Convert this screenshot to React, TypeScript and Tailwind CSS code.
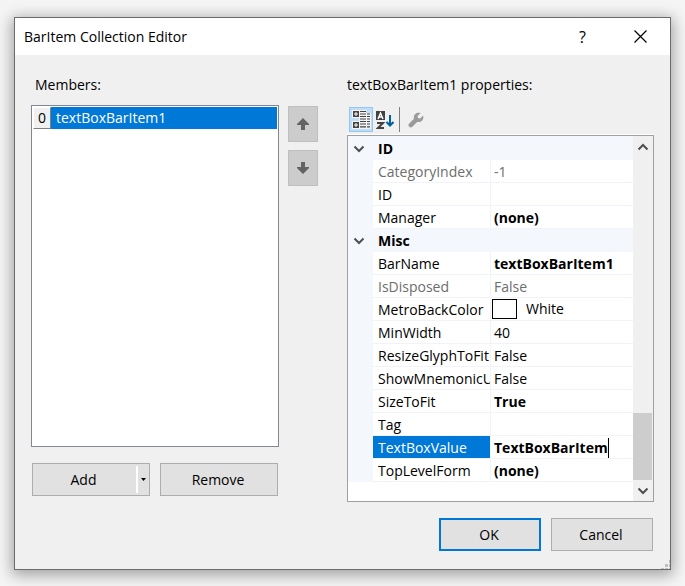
import { useState } from "react";
import clsx from "clsx";

interface Property {
    name: string;
    value?: string;
    bold?: boolean;
    readOnly?: boolean;
    swatch?: boolean;
    editing?: boolean;
}

const CATEGORIES: { title: string; properties: Property[] }[] = [
    {
        title: "ID",
        properties: [
            { name: "CategoryIndex", value: "-1", readOnly: true },
            { name: "ID" },
            { name: "Manager", value: "(none)", bold: true }
        ]
    },
    {
        title: "Misc",
        properties: [
            { name: "BarName", value: "textBoxBarItem1", bold: true },
            { name: "IsDisposed", value: "False", readOnly: true },
            { name: "MetroBackColor", value: "White", swatch: true },
            { name: "MinWidth", value: "40" },
            { name: "ResizeGlyphToFit", value: "False" },
            { name: "ShowMnemonicU", value: "False" },
            { name: "SizeToFit", value: "True", bold: true },
            { name: "Tag" },
            { name: "TextBoxValue", value: "TextBoxBarItem", bold: true, editing: true },
            { name: "TopLevelForm", value: "(none)", bold: true }
        ]
    }
];

function Chevron({ up = false }: { up?: boolean }) {
    return (
        <svg width="12" height="8" viewBox="0 0 12 8" fill="none" stroke="#505050" strokeWidth="2">
            <path d={up ? "M1.5 6.5 6 2l4.5 4.5" : "M1.5 1.5 6 6l4.5-4.5"} />
        </svg>
    );
}

function MoveButton({ label, down = false }: { label: string; down?: boolean }) {
    return (
        <button
            aria-label={label}
            className="flex h-9 w-full items-center justify-center border border-[#bfbfbf] bg-[#cccccc]"
        >
            <svg width="12" height="12" viewBox="0 0 12 12" fill="#636363">
                <path d={down ? "M4 0h4v5h4v1L6 12 0 6V5h4z" : "M4 12h4V7h4V6L6 0 0 6v1h4z"} />
            </svg>
        </button>
    );
}

function CategorizedIcon() {
    return (
        <svg width="20" height="19" viewBox="0 0 20 19" fill="#424242">
            <path d="M1 0h14v3h5v16H1v-8h7V8H1z" fill="#f4f4f4" />
            <path d="M2 1h6v6H2zM2 12h6v6H2z" />
            <path d="M3 4h4M5 2v4M3 15h4M5 13v4" stroke="#fff" />
            <path
                d="M9 1.500h6M9 4h6M9 6.500h6M9 9h6M9 11.500h6M9 14h6M9 16.800h6M16 4h3M16 6.500h3M16 9h3M16 11.500h3M16 14h3M16 16.800h3"
                stroke="#424242"
                strokeWidth="1.2"
            />
        </svg>
    );
}

function AlphabeticalIcon() {
    return (
        <svg width="18" height="18" viewBox="0 0 18 18" fill="none">
            <path d="M0 0h9v9H0z" fill="#424242" />
            <path d="m2 8 2.5-6L7 8M3 6h3" stroke="#fff" strokeWidth="1.4" />
            <path d="M1 12h6l-5 5h6" stroke="#424242" strokeWidth="2" />
            <path d="M14 4v11M10.5 11l3.5 3.5 3.5-3.5" stroke="#00609c" strokeWidth="2" />
        </svg>
    );
}

function WrenchIcon() {
    return (
        <svg width="16" height="16" viewBox="0 0 16 16" fill="#9b9b9b">
            <path d="M12.6 1 9.6 4l.4 2 2.1.5 3-2.9c1.2 4-1.9 7.300-6 6.300L4.400 14.700a2.200 2.200 0 0 1-3.200-3.200L6 6.800C5 3 8.300-.3 12.600 1z" />
        </svg>
    );
}

function PropertyRow({ property }: { property: Property }) {
    const { name, value, bold, readOnly, swatch, editing } = property;
    const [text, setText] = useState(value ?? "");

    return (
        <tr className={clsx("h-[23px]", readOnly && "text-[#6d6d6d]")}>
            <td className="bg-[#f4f7fc] p-0" />
            <th
                scope="row"
                className={clsx(
                    "border-r border-b border-[#f0f4fa] p-0 pt-[2px] pl-[5px] text-left font-normal",
                    editing && "bg-[#0078d7] text-white"
                )}
            >
                <div className="overflow-hidden whitespace-nowrap">{name}</div>
            </th>
            <td
                className={clsx(
                    "border-b border-[#f0f4fa] p-0 whitespace-nowrap",
                    swatch ? "pl-px" : "pt-[2px] pl-[3px]",
                    bold && "font-bold"
                )}
            >
                {editing ? (
                    <div className="flex items-center">
                        <input
                            aria-label={name}
                            value={text}
                            onChange={(e) => setText(e.target.value)}
                            className="field-sizing-content h-5 font-bold outline-none"
                        />
                        <span className="h-5 w-px bg-black" />
                    </div>
                ) : swatch ? (
                    <div className="flex items-center gap-[9px]">
                        <span className="h-5 w-[25px] border border-black bg-white" />
                        {value}
                    </div>
                ) : (
                    value
                )}
            </td>
        </tr>
    );
}

function PropertyGrid() {
    return (
        <div className="flex h-[367px] border border-[#a0a0a0] bg-white">
            <div className="min-w-0 flex-1 overflow-hidden">
                <table className="w-full table-fixed border-separate border-spacing-0 border-t border-[#f4f7fc] leading-5">
                    <colgroup>
                        <col className="w-[25px]" />
                        <col className="w-[118px]" />
                        <col />
                    </colgroup>
                    {CATEGORIES.map((category) => (
                        <tbody key={category.title}>
                            <tr className="h-[23px] bg-[#f4f7fc]">
                                <td className="p-0">
                                    <button aria-label={`Collapse ${category.title}`} className="flex w-full pl-[5px]">
                                        <Chevron />
                                    </button>
                                </td>
                                <th colSpan={2} className="p-0 pl-[5px] text-left font-bold">
                                    {category.title}
                                </th>
                            </tr>
                            {category.properties.map((property) => (
                                <PropertyRow key={property.name} property={property} />
                            ))}
                        </tbody>
                    ))}
                </table>
            </div>
            <div className="flex w-5 flex-col bg-[#f0f0f0] pr-px">
                <button aria-label="Scroll up" className="flex h-[21px] items-center justify-center">
                    <Chevron up />
                </button>
                <div className="flex flex-1 flex-col justify-end">
                    <div className="h-[67px] bg-[#cdcdcd]" />
                </div>
                <button aria-label="Scroll down" className="flex h-[21px] items-center justify-center">
                    <Chevron />
                </button>
            </div>
        </div>
    );
}

export default function App() {
    return (
        <div className="min-h-screen bg-[#f5f5f5] px-[14px] pt-[17px] pb-4 font-['Open_Sans','Noto_Sans',sans-serif] text-[14px] leading-5 text-black">
            <div className="relative border border-[#6b6b6b] bg-[#f0f0f0] shadow-[0_3px_14px_2px_rgba(0,0,0,0.35)]">
                <header className="flex h-[37px] items-center bg-white pl-[9px]">
                    <h1 className="flex-1">BarItem Collection Editor</h1>
                    <button aria-label="Help" className="h-full w-[57px] text-base">
                        ?
                    </button>
                    <button aria-label="Close" className="flex h-full w-[59px] items-center justify-center">
                        <svg width="13" height="13" viewBox="0 0 13 13" stroke="#000" strokeWidth="1.2">
                            <path d="m.5.5 12 12m0-12-12 12" />
                        </svg>
                    </button>
                </header>

                <main className="px-4 pt-5 pb-[18px]">
                    <div className="grid grid-cols-[248fr_68px_307fr]">
                        <section className="flex flex-col pb-[6px]">
                            <h2 id="members" className="pl-1">Members:</h2>
                            <ul role="listbox" aria-labelledby="members" className="mt-[10px] flex-1 border border-[#828790] bg-white p-px">
                                <li role="option" aria-selected="true" className="flex h-[22px] items-center bg-[#0078d7] text-white">
                                    <span className="h-full w-[18px] border border-t-white border-r-[#808080] border-b-[#808080] border-l-white bg-[#f0f0f0] text-center text-black">
                                        0
                                    </span>
                                    <span className="pl-[5px]">textBoxBarItem1</span>
                                </li>
                            </ul>
                            <div className="mt-4 grid grid-cols-2 gap-[10px] px-px">
                                <div className="flex h-[33px] border border-[#adadad] bg-[#e1e1e1]">
                                    <button className="flex-1 pr-[2px]">Add</button>
                                    <span className="my-[2px] w-[2px] bg-white" />
                                    <button aria-label="Add item of type" className="flex w-[11px] items-center justify-center">
                                        <svg width="5" height="3" viewBox="0 0 5 3">
                                            <path d="M0 0h5L2.5 3z" />
                                        </svg>
                                    </button>
                                </div>
                                <button className="h-[33px] border border-[#adadad] bg-[#e1e1e1] pr-[2px]">Remove</button>
                            </div>
                        </section>

                        <div className="flex flex-col gap-2 pt-[31px] pr-[29px] pl-[9px]">
                            <MoveButton label="Move up" />
                            <MoveButton label="Move down" down />
                        </div>

                        <section>
                            <h2>textBoxBarItem1 properties:</h2>
                            <div className="mt-3 flex h-7 items-start border-b border-white pl-[2px]">
                                <button aria-label="Categorized" className="flex h-[25px] w-6 items-center justify-center border border-[#90c8f6] bg-[#c0ddf5]">
                                    <CategorizedIcon />
                                </button>
                                <button aria-label="Alphabetical" className="flex h-[25px] w-6 items-center justify-center">
                                    <AlphabeticalIcon />
                                </button>
                                <span className="mx-[2px] h-[25px] w-px bg-[#808080]" />
                                <button aria-label="Property Pages" disabled className="flex h-[25px] w-7 items-center justify-center">
                                    <WrenchIcon />
                                </button>
                            </div>
                            <PropertyGrid />
                        </section>
                    </div>

                    <footer className="mt-4 flex justify-end gap-[10px] pr-px">
                        <button className="h-[33px] w-[102px] border-2 border-[#0078d7] bg-[#e1e1e1] pr-[2px]">OK</button>
                        <button className="h-[33px] w-[102px] border border-[#adadad] bg-[#e1e1e1] pr-[2px]">Cancel</button>
                    </footer>
                </main>

                {/* resize grip */}
                <svg className="absolute right-0 bottom-0" width="9" height="9" viewBox="0 0 9 9" fill="#bfbfbf">
                    <path d="M8 0h1v3H8zM4 4h3v3H4zM8 4h1v3H8zM0 8h3v1H0zM4 8h3v1H4zM8 8h1v1H8z" />
                </svg>
            </div>
        </div>
    );
}
